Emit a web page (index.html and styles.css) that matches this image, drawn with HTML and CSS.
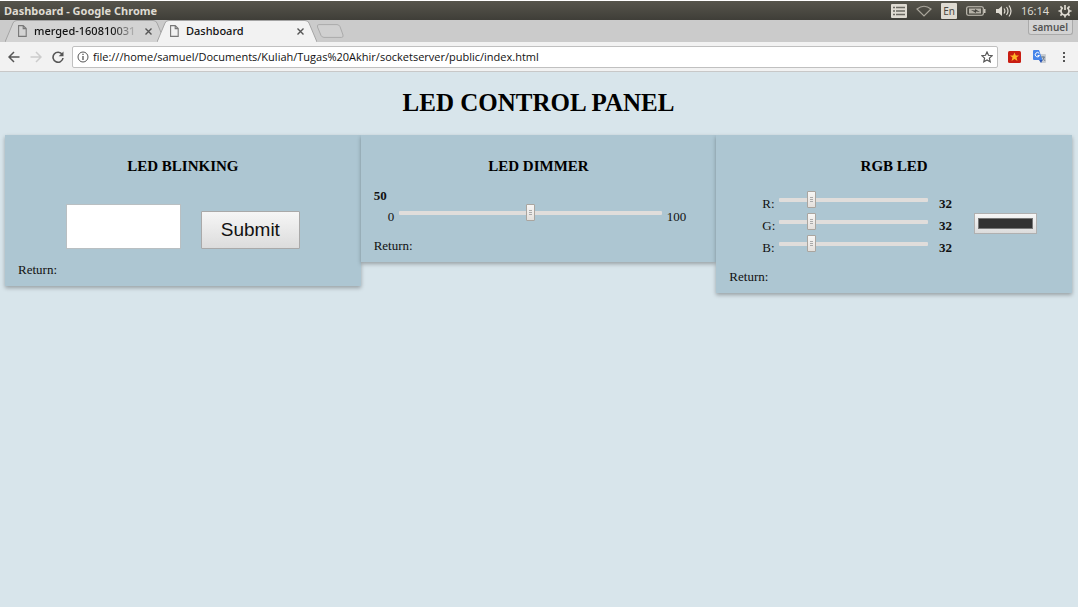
FILE: index.html
```html
<!DOCTYPE html>
<html lang="en">
<head>
<meta charset="utf-8">
<meta name="viewport" content="width=device-width, initial-scale=1">
<title>Dashboard</title>
<link rel="stylesheet" href="styles.css">
</head>
<body>
<div class="desktop">
  <header class="system-bar">
    <span class="window-title">Dashboard - Google Chrome</span>
    <div class="indicators">
      <svg width="16" height="16" viewBox="0 0 16 16" aria-hidden="true"><rect y="1" width="16" height="14" rx="1" fill="#dfdbd2"/><path d="M2 4.500h2M2 8h2M2 11.500h2M5 4.500h9M5 8h9M5 11.500h9" stroke="#6b6962" stroke-width="1.300"/></svg>
      <svg width="16" height="12" viewBox="0 0 16 12" aria-hidden="true"><path d="M1 4Q8-1.500 15 4L8 11Z" fill="none" stroke="#aaa69c" stroke-width="1.2"/></svg>
      <span class="lang">En</span>
      <svg width="20" height="10" viewBox="0 0 20 10" aria-hidden="true"><rect x=".7" y=".7" width="16.600" height="8.600" rx="1.500" fill="none" stroke="#c9c5bb" stroke-width="1.100"/><path d="M18 3h1.500v4H18z" fill="#c9c5bb"/><rect x="3" y="2.500" width="12" height="5" fill="#b5b1a7"/><path d="M5 4l4 .5V3l5 3-4-.5V7z" fill="#44433d"/></svg>
      <svg width="17" height="14" viewBox="0 0 17 14" aria-hidden="true"><path d="M1 5h2.500L7 2v10L3.500 9H1z" fill="#dfdbd2"/><path d="M9 4.500q1.800 2.500 0 5M11.500 3q3 4 0 8M14 1.500q4 5.500 0 11" fill="none" stroke="#dfdbd2" stroke-width="1.200"/></svg>
      <span class="clock">16:14</span>
      <svg width="14" height="14" viewBox="0 0 14 14" aria-hidden="true"><path d="M4.700 3.800a4 4 0 1 0 4.600 0M7 1v5" fill="none" stroke="#dfdbd2" stroke-width="1.700"/><path d="M.5 7H3m8 0h2.500M7 11v2.500M2.400 2.400l1.700 1.700m5.800 0l1.700-1.700M2.400 11.600l1.700-1.700m5.800 0l1.700 1.700" stroke="#dfdbd2" stroke-width="1.700"/></svg>
    </div>
  </header>

  <nav class="tab-strip" aria-label="Tabs">
    <div class="tab">
      <svg class="tab-shape" viewBox="0 0 160 22" preserveAspectRatio="none" aria-hidden="true"><path d="M0 22L8 3Q9 .5 12 .5H148Q151 .5 152 3L160 22" fill="#d3d3d3" stroke="#a4a4a4"/></svg>
      <svg class="page-icon" width="9" height="12" viewBox="0 0 9 12" aria-hidden="true"><path d="M.6.6h4.600l3 3v7.800H.6zM5.200.6v3h3" fill="none" stroke="#777" stroke-width="1.100"/></svg>
      <span class="tab-name faded">merged-160810031</span>
      <button class="tab-close" aria-label="Close tab"><svg width="7" height="7" viewBox="0 0 7 7"><path d="M.5.5l6 6m0-6l-6 6" stroke="#555" stroke-width="1.400"/></svg></button>
    </div>
    <div class="tab active">
      <svg class="tab-shape" viewBox="0 0 160 22" preserveAspectRatio="none" aria-hidden="true"><path d="M0 22L8 3Q9 .5 12 .5H148Q151 .5 152 3L160 22" fill="#f2f2f2" stroke="#a4a4a4"/></svg>
      <svg class="page-icon" width="9" height="12" viewBox="0 0 9 12" aria-hidden="true"><path d="M.6.6h4.600l3 3v7.800H.6zM5.200.6v3h3" fill="none" stroke="#777" stroke-width="1.100"/></svg>
      <span class="tab-name">Dashboard</span>
      <button class="tab-close" aria-label="Close tab"><svg width="7" height="7" viewBox="0 0 7 7"><path d="M.5.5l6 6m0-6l-6 6" stroke="#555" stroke-width="1.400"/></svg></button>
    </div>
    <button class="new-tab" aria-label="New tab"><svg width="28" height="14" viewBox="0 0 28 14"><path d="M3 .6h18q2 0 3 2l3 8.400q.6 2.400-1.500 2.400H8q-2 0-3-2L1.500 3Q.8.6 3 .6z" fill="#d0d0d0" stroke="#aaa"/></svg></button>
    <button class="profile">samuel</button>
  </nav>

  <div class="toolbar">
    <button class="tool" aria-label="Back"><svg width="12" height="12" viewBox="0 0 12 12"><path d="M11.500 6H1.500M6 1L1 6l5 5" fill="none" stroke="#555" stroke-width="1.500"/></svg></button>
    <button class="tool" aria-label="Forward"><svg width="12" height="12" viewBox="0 0 12 12"><path d="M.5 6h10M6 1l5 5-5 5" fill="none" stroke="#ccc" stroke-width="1.500"/></svg></button>
    <button class="tool" aria-label="Reload"><svg width="12" height="12" viewBox="0 0 12 12"><path d="M10.200 3.500A5 5 0 1 0 11 7" fill="none" stroke="#555" stroke-width="1.600"/><path d="M11.500.5v4.800H6.700z" fill="#555"/></svg></button>
    <div class="address">
      <svg width="12" height="12" viewBox="0 0 12 12" aria-hidden="true"><circle cx="6" cy="6" r="5" fill="none" stroke="#555"/><path d="M6 5v4M6 2.700v1.400" stroke="#555" stroke-width="1.300"/></svg>
      <input class="url" type="text" aria-label="Address" value="file:///home/samuel/Documents/Kuliah/Tugas%20Akhir/socketserver/public/index.html">
      <svg width="12" height="12" viewBox="0 0 12 12" aria-hidden="true"><path d="M6 1l1.500 3.300 3.600.4-2.700 2.400.8 3.600L6 8.900l-3.200 1.800.8-3.600L.9 4.700l3.600-.4z" fill="none" stroke="#555" stroke-width="1.200"/></svg>
    </div>
    <div class="extensions">
      <svg width="13" height="12" viewBox="0 0 13 12" aria-hidden="true"><rect width="13" height="12" rx="1.500" fill="#c91d12"/><path d="M6.500 1.500l1.300 3h3.200L8.500 6.500l1 3.500-3-2-3 2 1-3.500L2 4.500h3.200z" fill="#ffb629"/></svg>
      <svg width="13" height="13" viewBox="0 0 13 13" aria-hidden="true"><path d="M6 4h6q1 0 1 1v7q0 1-1 1H8z" fill="#c9cdd2"/><path d="M1 0h5l3.500 10H1Q0 10 0 9V1q0-1 1-1z" fill="#4585ea"/><path d="M6.300 3.500A2.200 2.200 0 1 0 6.500 5.500H4.600" fill="none" stroke="#fff"/><path d="M8 7h4M10 6v1q1 3 2 4M11.500 7Q10.500 10 8.500 11" fill="none" stroke="#68798c" stroke-width=".8"/><path d="M6 10h3.500L8 13z" fill="#2856b8"/></svg>
      <svg width="12" height="12" viewBox="0 0 12 12" aria-hidden="true"><path d="M5 1h2v2H5zM5 5h2v2H5zM5 9h2v2H5z" fill="#555"/></svg>
    </div>
  </div>

  <main class="page">
    <h1>LED CONTROL PANEL</h1>
    <div class="panels">
      <section class="card">
        <h2>LED BLINKING</h2>
        <form class="blink">
          <input class="blink-count" type="text" aria-label="Blink count">
          <button class="submit" type="button">Submit</button>
        </form>
        <p class="return">Return:</p>
      </section>

      <section class="card">
        <h2>LED DIMMER</h2>
        <output class="dim-value" for="dimmer">50</output>
        <div class="dimmer">
          <span class="label">0</span>
          <input id="dimmer" type="range" min="0" max="100" value="50" aria-label="Dimmer">
          <span class="label">100</span>
        </div>
        <p class="return">Return:</p>
      </section>

      <section class="card">
        <h2>RGB LED</h2>
        <div class="rgb">
          <div class="channels">
            <label class="label" for="red">R:</label>
            <input id="red" type="range" min="0" max="160" value="32">
            <output class="label value" for="red">32</output>
            <label class="label" for="green">G:</label>
            <input id="green" type="range" min="0" max="160" value="32">
            <output class="label value" for="green">32</output>
            <label class="label" for="blue">B:</label>
            <input id="blue" type="range" min="0" max="160" value="32">
            <output class="label value" for="blue">32</output>
          </div>
          <input class="swatch" type="color" value="#323232" aria-label="LED colour">
        </div>
        <p class="return">Return:</p>
      </section>
    </div>
  </main>
</div>
</body>
</html>
```
FILE: styles.css
```css
* { box-sizing: border-box; }

body {
  margin: 0;
  background: #fff;
  font-family: "Liberation Serif", serif;
  font-size: 13px;
  line-height: 16px;
  color: #111;
}

button { border: 0; padding: 0; background: none; }
svg { display: block; flex: none; }

.desktop {
  display: flex;
  flex-direction: column;
  min-height: 100vh;
  padding: 1px 6px 3px 0;
}

/* System bar */
.system-bar {
  display: flex;
  justify-content: space-between;
  align-items: center;
  height: 19px;
  padding: 0 6px 0 4px;
  background: linear-gradient(#57554c, #3f3e38);
  color: #dfdbd2;
  font-family: "Noto Sans", sans-serif;
  font-size: 11px;
}
.window-title { font-weight: 700; }
.indicators { display: flex; align-items: center; gap: 9px; }
.lang {
  padding: 0 2px;
  border-radius: 1px;
  background: #dfdbd2;
  color: #4a4943;
  font-size: 10px;
}

/* Tabs */
.tab-strip {
  display: flex;
  height: 22px;
  padding-left: 5px;
  background: #cbcbcb;
  font-family: "Noto Sans", sans-serif;
  font-size: 11px;
  font-weight: 500;
}
.tab {
  position: relative;
  display: flex;
  align-items: center;
  gap: 7px;
  width: 160px;
  margin-right: -8px;
  padding: 0 13px;
}
.tab.active { z-index: 1; }
.tab-shape { position: absolute; inset: 0; width: 100%; height: 100%; }
.page-icon, .tab-name, .tab-close { position: relative; }
.tab-name { flex: 1; white-space: nowrap; }
.faded {
  -webkit-mask-image: linear-gradient(90deg, #000 75%, transparent);
  mask-image: linear-gradient(90deg, #000 75%, transparent);
}
.new-tab { margin-left: 7px; }
.profile {
  align-self: flex-start;
  margin: 0 5px 0 auto;
  padding: 0 4px;
  border: 1px solid #aaa;
  border-top: 0;
  border-radius: 0 0 3px 3px;
  background: #d3d3d3;
  color: #555;
  font: 600 10px/14px "Noto Sans", sans-serif;
}

/* Toolbar */
.toolbar {
  display: flex;
  align-items: center;
  gap: 10px;
  height: 30px;
  padding: 0 8px;
  border-bottom: 1px solid #c8c8c8;
  background: #f2f2f2;
}
.address {
  display: flex;
  flex: 1;
  align-items: center;
  gap: 4px;
  height: 22px;
  margin-left: -2px;
  padding: 0 4px;
  border: 1px solid #c0c0c0;
  border-radius: 2px;
  background: #fff;
}
.url {
  flex: 1;
  min-width: 0;
  padding: 0;
  border: 0;
  outline: 0;
  background: none;
  color: #111;
  font: 11px/16px "Open Sans", sans-serif;
}
.extensions { display: flex; align-items: center; gap: 12px; }

/* Page */
.page {
  flex: 1;
  padding: 16px 6px 0 5px;
  background: #d8e5eb;
}
h1 {
  margin: 0 0 17px;
  font-size: 25px;
  line-height: 30px;
  text-align: center;
  color: #000;
}
.panels {
  display: grid;
  grid-template-columns: repeat(3, 1fr);
  align-items: start;
}
.card {
  padding: 22px 13px 8px;
  background: #adc6d2;
  box-shadow: 0 2px 4px rgba(0, 0, 0, .3);
}
h2 {
  margin: 0 0 13px;
  font-size: 15px;
  line-height: 18px;
  text-align: center;
  color: #000;
}
.return { margin: 13px 0 0; }

.blink {
  display: flex;
  justify-content: center;
  align-items: flex-end;
  gap: 20px;
  margin-top: 29px;
}
.blink-count {
  width: 115px;
  height: 45px;
  padding: 4px 8px;
  border: 1px solid #b9bfc2;
  background: #fff;
  font: 19px "Liberation Sans", sans-serif;
}
.submit {
  padding: 6px 19px;
  border: 1px solid #a9a9a9;
  border-radius: 1px;
  background: linear-gradient(#f6f6f6, #dcdcdc);
  color: #111;
  font: 19px/24px "Liberation Sans", sans-serif;
}

.label { padding-top: 5px; }
.dim-value, .value { font-weight: bold; }
.dim-value { display: block; }
.dimmer {
  display: flex;
  align-items: flex-start;
  gap: 5px;
  padding: 0 17px 0 14px;
}
.dimmer input { flex: 1; }

.rgb {
  display: flex;
  align-items: center;
  gap: 22px;
  padding: 3px 22px 0 33px;
}
.channels {
  display: grid;
  flex: 1;
  grid-template-columns: 17px 1fr 24px;
  align-items: start;
  row-gap: 1px;
}
.value { margin-left: 11px; }

/* Sliders */
input[type="range"] {
  -webkit-appearance: none;
  appearance: none;
  width: 100%;
  min-width: 0;
  height: 17px;
  margin: 0;
  background: none;
}
input[type="range"]::-webkit-slider-runnable-track {
  height: 4px;
  border-radius: 1px;
  background: #e0dddb;
}
input[type="range"]::-webkit-slider-thumb {
  -webkit-appearance: none;
  width: 9px;
  height: 17px;
  margin-top: -7px;
  border: 1px solid #aaa59f;
  border-radius: 1px;
  background:
    linear-gradient(#aaa 1px, transparent 1px 2px, #aaa 2px 3px, transparent 3px 4px, #aaa 4px 5px) center / 3px 5px no-repeat,
    linear-gradient(#f7f6f5, #e4e0dc);
}

.swatch {
  -webkit-appearance: none;
  appearance: none;
  width: 63px;
  height: 21px;
  padding: 4px 3px;
  border: 1px solid #b0b0b0;
  background: linear-gradient(#f6f6f6, #dcdcdc);
}
.swatch::-webkit-color-swatch-wrapper { padding: 0; }
.swatch::-webkit-color-swatch { border: 1px solid #777; border-radius: 0; }
```
